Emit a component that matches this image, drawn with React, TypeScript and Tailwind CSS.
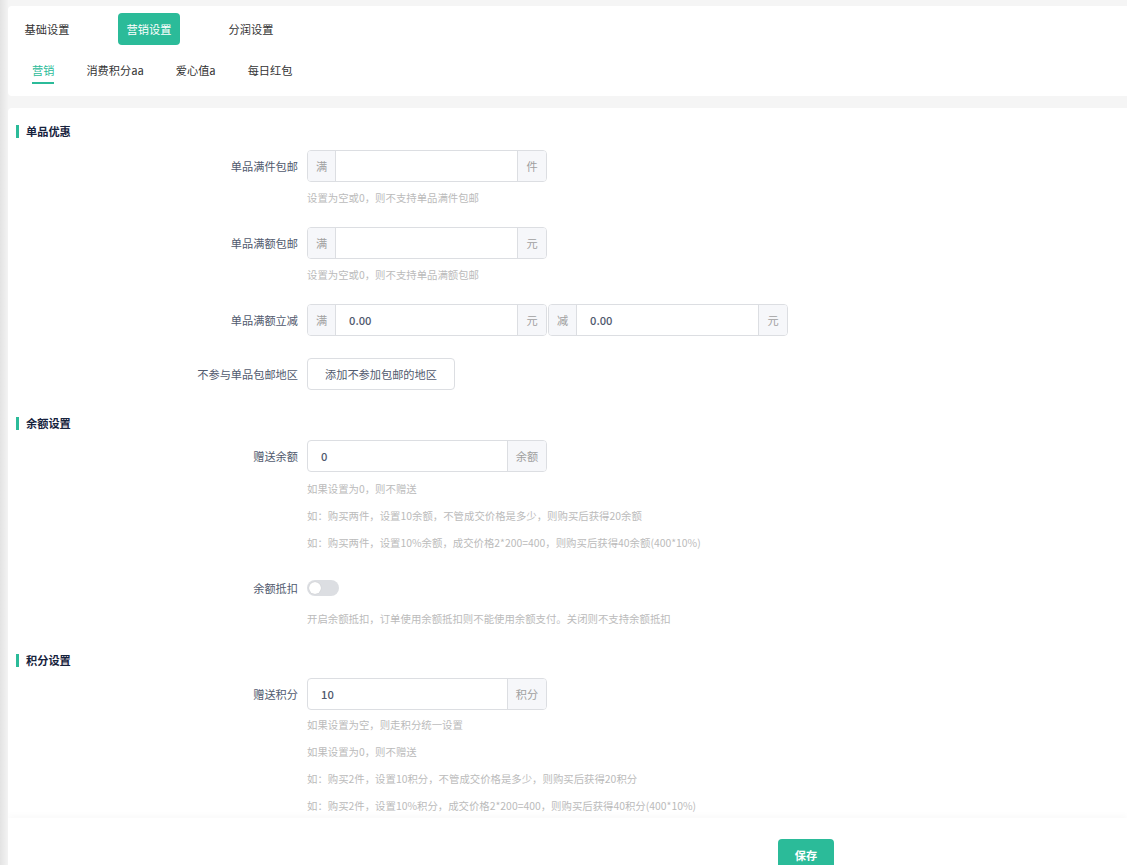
import React from "react";

const FONT = "font-['Noto_Sans_CJK_SC','Noto_Sans',sans-serif]";

function SectionTitle({ title, className }: { title: string; className?: string }) {
  return (
    <div className={`flex h-[14px] items-center ${className ?? ""}`}>
      <span className="ml-[8px] h-[13px] w-[3px] bg-[#2bbb99]" />
      <span className="ml-[7px] text-[11.2px] font-bold leading-[14px] text-[#17233d]">{title}</span>
    </div>
  );
}

function Label({ text }: { text: string }) {
  return (
    <div className="w-[299px] shrink-0 pr-[9px] text-right text-[11.2px] leading-[32px] text-[#515a6e]">
      {text}
    </div>
  );
}

function Help({ children, className }: { children: React.ReactNode; className?: string }) {
  return (
    <p className={`ml-[299px] text-[10.4px] leading-[14px] text-[#bbbbbb] ${className ?? ""}`}>{children}</p>
  );
}

function InputGroup({
  prefix,
  suffix,
  value,
  suffixClass = "w-[29px]",
}: {
  prefix?: string;
  suffix: string;
  value?: string;
  suffixClass?: string;
}) {
  return (
    <div className="flex h-[32px] w-[240px] overflow-hidden rounded-[4px] border border-[#dcdee2] bg-white">
      {prefix && (
        <div className="flex w-[28px] shrink-0 items-center justify-center border-r border-[#dcdee2] bg-[#f6f7fa] text-[11.2px] text-[#a0a0a0]">
          {prefix}
        </div>
      )}
      <div className="flex min-w-0 flex-1 items-center px-[13px] text-[11.2px] font-medium text-[#515a6e]">
        {value}
      </div>
      <div
        className={`flex shrink-0 items-center justify-center border-l border-[#dcdee2] bg-[#f6f7fa] text-[11.2px] text-[#a0a0a0] ${suffixClass}`}
      >
        {suffix}
      </div>
    </div>
  );
}

export default function App() {
  const mainTabs = ["基础设置", "营销设置", "分润设置"];
  const subTabs = ["营销", "消费积分aa", "爱心值a", "每日红包"];

  return (
    <div className={`flex h-[865px] w-full overflow-hidden bg-[#f5f5f5] ${FONT}`}>
      <div className="w-[8px] shrink-0 bg-gradient-to-r from-[#e3e3e3] to-[#f3f3f3]" />
      <div className="flex min-w-0 flex-1 flex-col">
        {/* tabs card */}
        <div className="mt-[6px] rounded-l-[4px] bg-white px-[8px] pt-[7px] pb-[12px]">
          <div className="flex gap-[40px]">
            {mainTabs.map((t, i) => (
              <div
                key={t}
                className={
                  i === 1
                    ? "flex h-[32px] w-[62px] items-center justify-center rounded-[4px] bg-[#2bbb99] text-[11.2px] text-white"
                    : "flex h-[32px] w-[62px] items-center justify-center text-[11.2px] text-[#333333]"
                }
              >
                {t}
              </div>
            ))}
          </div>
          <div className="mt-[11px] flex">
            {subTabs.map((t, i) => (
              <div key={t} className="px-[16px]">
                <div
                  className={
                    i === 0
                      ? "flex h-[28px] items-center border-b-2 border-[#2bbb99] pt-[2px] text-[11.2px] text-[#2bbb99]"
                      : "flex h-[28px] items-center border-b-2 border-transparent pt-[2px] text-[11.2px] text-[#333333]"
                  }
                >
                  {t}
                </div>
              </div>
            ))}
          </div>
        </div>

        {/* form card */}
        <div className="mt-[12px] flex min-h-0 flex-1 flex-col overflow-hidden rounded-tl-[4px] bg-white">
          <div className="flex min-h-0 flex-1 flex-col overflow-hidden pt-[16px]">
            <SectionTitle title="单品优惠" className="mb-[12px]" />

            <div className="mb-[22px]">
              <div className="flex">
                <Label text="单品满件包邮" />
                <InputGroup prefix="满" suffix="件" />
              </div>
              <Help className="mt-[9px]">设置为空或0，则不支持单品满件包邮</Help>
            </div>

            <div className="mb-[22px]">
              <div className="flex">
                <Label text="单品满额包邮" />
                <InputGroup prefix="满" suffix="元" />
              </div>
              <Help className="mt-[9px]">设置为空或0，则不支持单品满额包邮</Help>
            </div>

            <div className="mb-[22px] flex">
              <Label text="单品满额立减" />
              <div className="flex gap-[1px]">
                <InputGroup prefix="满" suffix="元" value="0.00" />
                <InputGroup prefix="减" suffix="元" value="0.00" />
              </div>
            </div>

            <div className="mb-[22px] flex">
              <Label text="不参与单品包邮地区" />
              <button className="h-[32px] rounded-[4px] border border-[#dcdee2] bg-white px-[17px] text-[11.2px] text-[#515a6e]">
                添加不参加包邮的地区
              </button>
            </div>

            <SectionTitle title="余额设置" className="mt-[4px] mb-[10px]" />

            <div className="mb-[22px]">
              <div className="flex">
                <Label text="赠送余额" />
                <InputGroup suffix="余额" value="0" suffixClass="w-[39px]" />
              </div>
              <Help className="mt-[10px]">如果设置为0，则不赠送</Help>
              <Help className="mt-[13px]">如：购买两件，设置10余额，不管成交价格是多少，则购买后获得20余额</Help>
              <Help className="mt-[13px]">如：购买两件，设置10%余额，成交价格2*200=400，则购买后获得40余额(400*10%)</Help>
            </div>

            <div className="mb-[22px]">
              <div className="flex">
                <Label text="余额抵扣" />
                <div className="flex h-[32px] items-center">
                  <span className="flex h-[16px] w-[32px] items-center rounded-full bg-[#dcdee2] px-[2px]">
                    <span className="h-[12px] w-[12px] rounded-full bg-white shadow-[0_0_1px_rgba(0,0,0,0.2)]" />
                  </span>
                </div>
              </div>
              <Help className="mt-[8px]">开启余额抵扣，订单使用余额抵扣则不能使用余额支付。关闭则不支持余额抵扣</Help>
            </div>

            <SectionTitle title="积分设置" className="mt-[5px] mb-[11px]" />

            <div>
              <div className="flex">
                <Label text="赠送积分" />
                <InputGroup suffix="积分" value="10" suffixClass="w-[39px]" />
              </div>
              <Help className="mt-[8px]">如果设置为空，则走积分统一设置</Help>
              <Help className="mt-[13px]">如果设置为0，则不赠送</Help>
              <Help className="mt-[13px]">如：购买2件，设置10积分，不管成交价格是多少，则购买后获得20积分</Help>
              <Help className="mt-[13px]">如：购买2件，设置10%积分，成交价格2*200=400，则购买后获得40积分(400*10%)</Help>
            </div>
          </div>

          <div className="h-[47px] shrink-0 bg-white pt-[21px] pl-[770px] shadow-[0_-3px_6px_rgba(0,0,0,0.025)]">
            <button className="h-[32px] w-[56px] rounded-[4px] bg-[#2bbb99] text-[11.2px] font-bold text-white">
              保存
            </button>
          </div>
        </div>
      </div>
    </div>
  );
}
